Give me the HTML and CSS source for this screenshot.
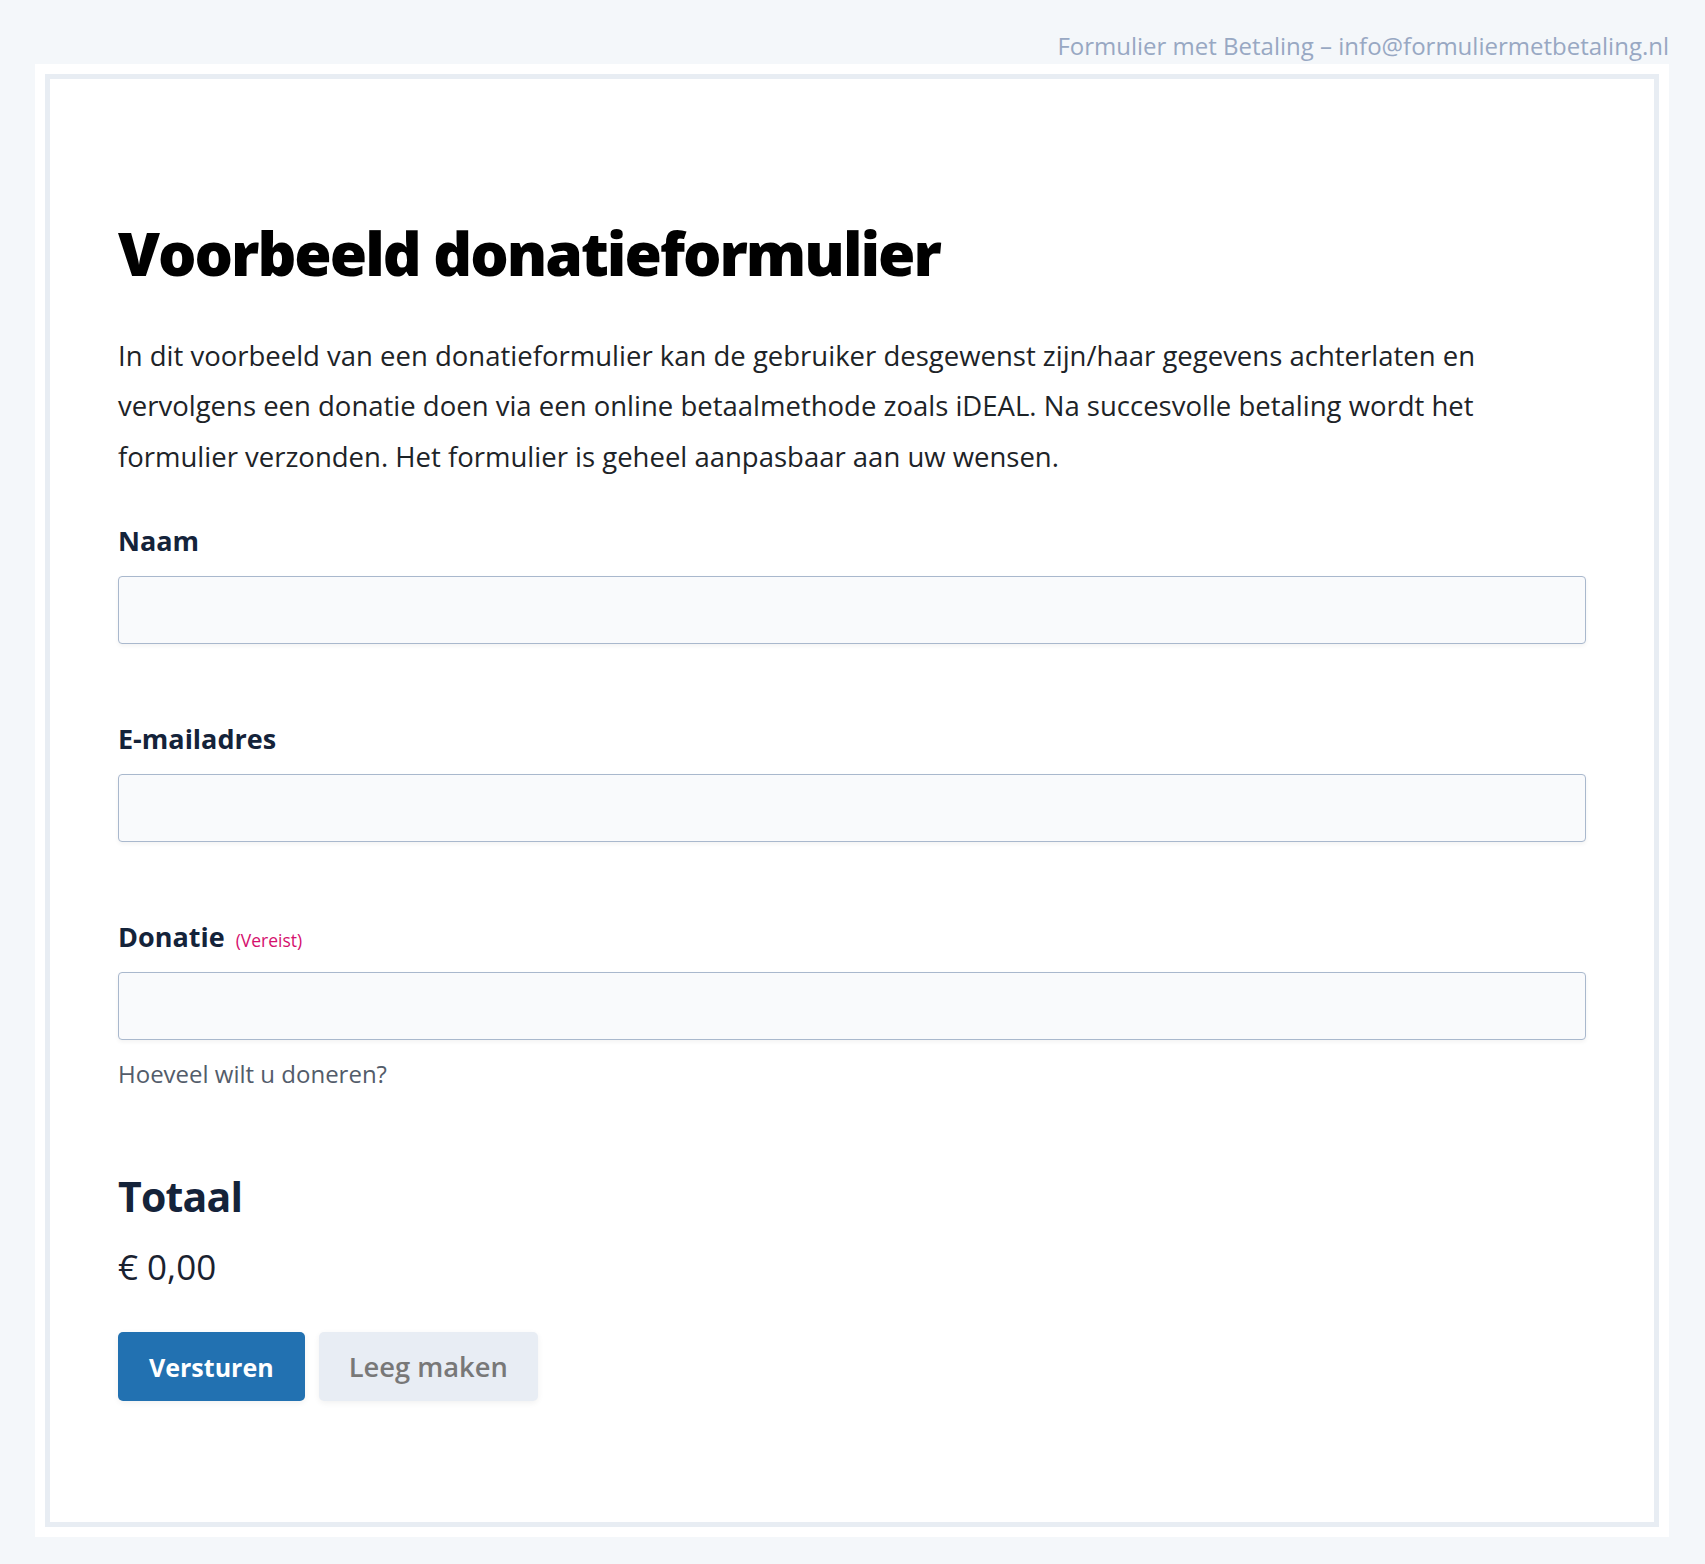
FILE: index.html
```html
<!DOCTYPE html>
<html lang="nl">
<head>
    <meta charset="UTF-8">
    <meta name="viewport" content="width=device-width, initial-scale=1.0">
    <title>Voorbeeld donatieformulier</title>
    <link rel="stylesheet" href="styles.css">
</head>
<body>
    <div class="topline">Formulier met Betaling – info@formuliermetbetaling.nl</div>
    <div class="sheet">
        <form class="form-card">
            <h1>Voorbeeld donatieformulier</h1>
            <p class="intro">In dit voorbeeld van een donatieformulier kan de gebruiker desgewenst zijn/haar gegevens achterlaten en vervolgens een donatie doen via een online betaalmethode zoals iDEAL. Na succesvolle betaling wordt het formulier verzonden. Het formulier is geheel aanpasbaar aan uw wensen.</p>

            <div class="field">
                <label for="naam">Naam</label>
                <input type="text" id="naam">
            </div>

            <div class="field">
                <label for="email">E-mailadres</label>
                <input type="email" id="email">
            </div>

            <div class="field">
                <label for="donatie">Donatie <span class="required">(Vereist)</span></label>
                <input type="text" id="donatie">
                <div class="help">Hoeveel wilt u doneren?</div>
            </div>

            <div class="total">
                <h2>Totaal</h2>
                <div class="amount">€ 0,00</div>
            </div>

            <div class="actions">
                <button type="submit" class="btn primary">Versturen</button>
                <button type="reset" class="btn secondary">Leeg maken</button>
            </div>
        </form>
    </div>
</body>
</html>
```
FILE: styles.css
```css
body {
    margin: 0;
    background-color: #f4f7fa;
    font-family: "Open Sans", "Noto Sans", sans-serif;
    color: #1d2327;
}
.topline {
    text-align: right;
    padding: 31px 36px 0 0;
    height: 33px;
    font-size: 24px;
    line-height: 30px;
    color: #98a8c3;
}
.sheet {
    background-color: #fff;
    margin: 0 36px 26px 35px;
    padding: 10px;
}
.form-card {
    border: 5px solid #e8edf3;
    padding: 138px 68px 121px;
}
h1 {
    margin: 0 0 41px;
    font-size: 60.5px;
    font-weight: 800;
    letter-spacing: -2px;
    line-height: 1.2;
    color: #000;
}
.intro {
    max-width: 1420px;
    margin: 0 0 41px;
    font-size: 27.5px;
    line-height: 50.6px;
}
.field {
    margin-bottom: 77px;
}
.field label {
    display: block;
    font-size: 27px;
    line-height: 36px;
    font-weight: 700;
    color: #14233a;
    margin-bottom: 17px;
}
.required {
    font-size: 17.5px;
    line-height: 1;
    font-weight: 400;
    color: #d5106d;
    margin-left: 4px;
}
.field input {
    display: block;
    box-sizing: border-box;
    width: 100%;
    height: 68px;
    border: 1px solid #a9b8cd;
    border-radius: 4px;
    background-color: #f9fafc;
    box-shadow: 0 2px 4px rgba(0, 0, 0, 0.05);
}
.help {
    margin-top: 19px;
    font-size: 24px;
    line-height: 30px;
    color: #535c6a;
}
.total {
    padding-top: 6px;
}
.total h2 {
    margin: 0;
    font-size: 41px;
    line-height: 1.2;
    font-weight: 700;
    letter-spacing: -0.8px;
    color: #14233a;
}
.amount {
    margin-top: 22px;
    font-size: 35px;
    line-height: 1.3;
    color: #1a2230;
}
.actions {
    display: flex;
    gap: 14px;
    margin-top: 43px;
}
.btn {
    height: 69px;
    border: none;
    border-radius: 5px;
    font-family: inherit;
    cursor: pointer;
    box-shadow: 0 2px 6px rgba(0, 0, 0, 0.06);
}
.primary {
    padding: 0 31px;
    background-color: #2271b1;
    color: #fff;
    font-size: 25px;
    font-weight: 700;
}
.secondary {
    padding: 0 30px;
    background-color: #e8edf4;
    color: #787878;
    font-size: 27.3px;
    font-weight: 600;
}
```
